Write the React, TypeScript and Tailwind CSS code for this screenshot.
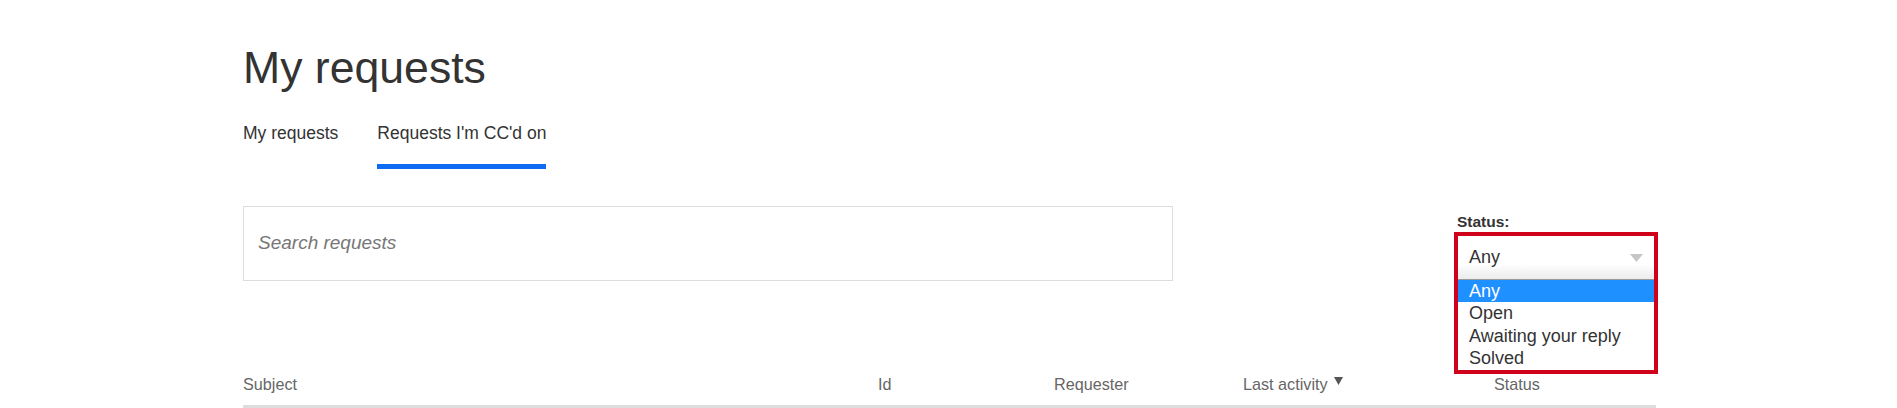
import { useState } from 'react';

const statusOptions = ['Any', 'Open', 'Awaiting your reply', 'Solved'];

function Tabs() {
    return (
        <div className="mt-[27px] flex gap-[39px]">
            <div className="pb-[24px] text-[17.5px] leading-[24px] text-[#333]">My requests</div>
            <div className="border-b-[5px] border-[#0d6cf2] pb-[19px] text-[17.5px] leading-[24px] text-[#333]">
                Requests I'm CC'd on
            </div>
        </div>
    );
}

function StatusFilter() {
    const [selected] = useState<string>('Any');

    return (
        <div className="w-[204px] pt-[7px]">
            <label className="block pl-[3px] text-[15.5px] font-bold leading-[18px] text-[#333]">Status:</label>
            <div className="relative mt-[1px] h-[48px]">
                {/* open dropdown, outlined in red */}
                <div className="absolute left-0 top-0 z-10 w-[204px] border-4 border-[#d0021b] bg-white">
                    <div className="flex h-[44px] items-center justify-between border-b border-[#9a9a9a] bg-[linear-gradient(to_bottom,#ffffff_65%,#ececec)] pl-[11px] pr-[11px] text-[18px] text-[#333]">
                        <span>{selected}</span>
                        <svg width="13" height="8" viewBox="0 0 13 8" className="mt-[1px]">
                            <path d="M0 0 L13 0 L6.5 8 Z" fill="#c6c6c6" />
                        </svg>
                    </div>
                    <ul>
                        {statusOptions.map((opt) => (
                            <li
                                key={opt}
                                className={
                                    opt === selected
                                        ? 'h-[22.6px] bg-[#1e90ff] pl-[11px] text-[18px] leading-[22.6px] text-white'
                                        : 'h-[22.6px] pl-[11px] text-[18px] leading-[22.6px] text-[#333]'
                                }
                            >
                                {opt}
                            </li>
                        ))}
                    </ul>
                </div>
            </div>
        </div>
    );
}

function TableHeader() {
    return (
        <div className="mt-[93px] grid grid-cols-[635px_176px_189px_250px_1fr] border-b-4 border-[#dddddd] pb-[11px] text-[16.2px] leading-[20px] text-[#666]">
            <div>Subject</div>
            <div>Id</div>
            <div>Requester</div>
            <div className="flex items-center">
                Last activity
                <svg width="9" height="8" viewBox="0 0 9 8" className="mb-[5px] ml-[6px]">
                    <path d="M0 0 L9 0 L4.5 8 Z" fill="#555" />
                </svg>
            </div>
            <div className="pl-[1px]">Status</div>
        </div>
    );
}

export default function App() {
    const [query, setQuery] = useState<string>('');

    return (
        <div className="h-[408px] w-full overflow-hidden bg-white font-['Liberation_Sans',Arial,sans-serif]">
            <div className="ml-[243px] w-[1413px]">
                <h1 className="pt-[41.5px] text-[44.6px] font-normal leading-[52px] text-[#333]">My requests</h1>
                <Tabs />

                {/* Filters */}
                <div className="mt-[37px] flex items-start justify-between">
                    <input
                        type="text"
                        value={query}
                        onChange={(e) => setQuery(e.target.value)}
                        placeholder="Search requests"
                        className="h-[75px] w-[930px] border border-[#dddddd] pl-[14px] text-[19px] italic text-[#333] outline-none placeholder:text-[#777]"
                    />
                    <div className="-mr-[2px]">
                        <StatusFilter />
                    </div>
                </div>

                <TableHeader />
            </div>
        </div>
    );
}
